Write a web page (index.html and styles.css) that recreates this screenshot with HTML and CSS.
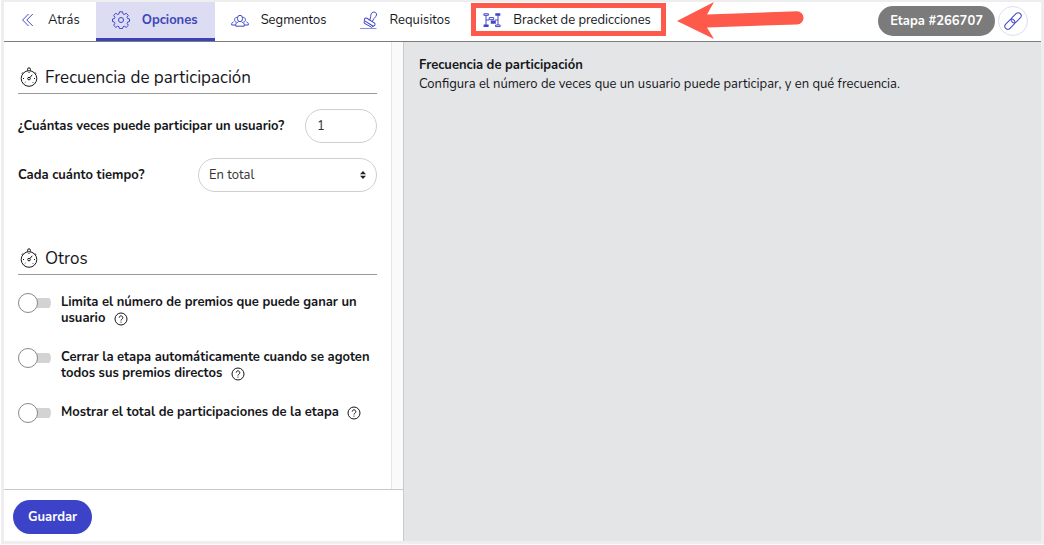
FILE: index.html
```html
<!DOCTYPE html>
<html lang="es">
<head>
<meta charset="utf-8">
<meta name="viewport" content="width=device-width, initial-scale=1">
<title>Opciones de la etapa</title>
<link rel="stylesheet" href="styles.css">
</head>
<body>
<svg class="defs" aria-hidden="true">
  <symbol id="stopwatch" viewBox="0 0 18 20">
    <circle cx="9" cy="11.500" r="7.800"/>
    <path d="M7.600 3.600V2.200a1.400 1.400 0 0 1 2.800 0v1.400M3 5.400 1.900 6.600M15 5.400l1.100 1.200M10 10.600l2.200-2.800"/>
    <circle cx="9" cy="11.600" r="1.300"/>
    <path d="M9 5v1M3 11.500h1M14 11.500h1M4.800 15.700l.7-.7M13.200 15.700l-.7-.7"/>
  </symbol>
  <symbol id="help" viewBox="0 0 14 14">
    <circle cx="7" cy="7" r="6"/>
    <path d="M5.200 5.600a1.800 1.800 0 1 1 2.700 1.600c-.6.400-.9.700-.9 1.300M7 9.600v1"/>
  </symbol>
</svg>
<div class="app">
  <header class="topbar">
    <nav class="tabs">
      <a class="tab tab-back" href="#atras">
        <svg class="icon" viewBox="0 0 18 18"><path d="M8.600 3 2.600 9l6 6M12.800 3l-6 6 6 6"/></svg>
        Atrás
      </a>
      <a class="tab tab-active" href="#opciones" aria-current="page">
        <svg class="icon" viewBox="0 0 18 18"><circle cx="9" cy="9" r="2.500"/><path d="M7.500.8h3l.5 2.100 1.300.6 1.900-1.200 2.100 2.100-1.200 1.900.6 1.300 1.800.4v2.500l-1.900.6-.5 1.300 1.200 1.900-2.100 2.100-1.900-1.200-1.300.6-.5 1.800h-3L7 15.800l-1.300-.6-1.900 1.200-2.100-2.100 1.200-1.900-.5-1.300-1.900-.6V8l1.900-.4.5-1.300-1.200-1.900 2.100-2.100 1.900 1.200L7 2.900z"/></svg>
        Opciones
      </a>
      <a class="tab" href="#segmentos">
        <svg class="icon" viewBox="0 0 18 18"><ellipse cx="9" cy="7.500" rx="2.600" ry="3.200"/><path d="M5.600 11.200a1.900 2.400 0 1 1 .6-4.600M12.400 11.200a1.900 2.400 0 1 0-.6-4.600M4.800 15.200v-1.600c0-1.300 1-2 2.600-2.600M13.200 15.200v-1.600c0-1.300-1-2-2.600-2.600M4.800 15.200h8.400M4.800 14H.7v-1.100c0-1 .8-1.500 1.800-1.900M13.200 14h4.100v-1.100c0-1-.8-1.500-1.800-1.900"/></svg>
        Segmentos
      </a>
      <a class="tab" href="#requisitos">
        <svg class="icon" viewBox="0 0 18 18"><path class="pale" d="M0 17.500h16.500"/><path d="M9.300 9.400c1.300-1.500 1.200-3.200 1.500-5.200.4-2 1.700-3.400 3.700-3.100 2.200.4 2.500 2.600 1.400 4.200-1.100 1.700-2.800 2.700-3.500 5.300"/><rect x="3.700" y="9.300" width="12" height="3.400" rx="1.700" transform="rotate(32 9.700 11)"/><path d="M4.300 10.200 4 12l7.500 4.300 2-1.100"/></svg>
        Requisitos
      </a>
      <a class="tab tab-marked" href="#bracket">
        <svg class="icon" viewBox="0 0 18 18"><path d="M3 4v10M15 4v10M3 9h3M12 9h3"/><path class="solid" d="M12.300 2.300h5v2.400h-5zM7.800 9.500h5v3.200h-5zM.6 13.600h5V16h-5z"/><path class="hollow" d="M.9 2.800h4.500v1.500H.9zM6.200 6.600h4.500v2.100H6.200zM12.600 14h4.500v1.600h-4.500z"/></svg>
        Bracket de predicciones
        <span class="marker"></span>
        <svg class="arrow" viewBox="0 0 130 38" aria-hidden="true"><path d="M0 19 37 0 30 12.500 120 9.200a6.600 6.600 0 0 1 0 13.200L30 25.500 37 37z"/></svg>
      </a>
    </nav>
    <div class="stage">
      <span class="badge">Etapa #266707</span>
      <button class="link-button" type="button" aria-label="Copiar enlace">
        <svg class="icon" viewBox="0 0 18 18"><g transform="rotate(-45 9 9)"><rect x="-1.300" y="6" width="11.600" height="6" rx="3"/><rect x="7.700" y="6" width="11.600" height="6" rx="3"/></g></svg>
      </button>
    </div>
  </header>
  <div class="content">
    <form class="panel">
      <div class="scroll">
        <section class="group">
          <h2 class="heading"><svg class="watch"><use href="#stopwatch"/></svg>Frecuencia de participación</h2>
          <div class="field">
            <label for="veces">¿Cuántas veces puede participar un usuario?</label>
            <input class="control control-small" id="veces" type="text" inputmode="numeric" value="1">
          </div>
          <div class="field">
            <label for="tiempo">Cada cuánto tiempo?</label>
            <span class="select-wrap">
              <select class="control" id="tiempo"><option>En total</option></select>
              <svg class="caret" viewBox="0 0 6 8"><path d="M0 3.200 3 0l3 3.200zM0 4.800h6L3 8z"/></svg>
            </span>
          </div>
        </section>
        <section class="group">
          <h2 class="heading"><svg class="watch"><use href="#stopwatch"/></svg>Otros</h2>
          <div class="option">
            <input class="switch" id="limite" type="checkbox" role="switch">
            <label for="limite">Limita el número de premios que puede ganar un usuario <svg class="help"><use href="#help"/></svg></label>
          </div>
          <div class="option">
            <input class="switch" id="cerrar" type="checkbox" role="switch">
            <label for="cerrar">Cerrar la etapa automáticamente cuando se agoten todos sus premios directos <svg class="help"><use href="#help"/></svg></label>
          </div>
          <div class="option">
            <input class="switch" id="mostrar" type="checkbox" role="switch">
            <label for="mostrar">Mostrar el total de participaciones de la etapa <svg class="help"><use href="#help"/></svg></label>
          </div>
        </section>
      </div>
      <footer class="actions"><button class="save" type="button">Guardar</button></footer>
    </form>
    <main class="info">
      <h1 class="info-title">Frecuencia de participación</h1>
      <p class="info-text">Configura el número de veces que un usuario puede participar, y en qué frecuencia.</p>
    </main>
  </div>
</div>
</body>
</html>
```
FILE: styles.css
```css
* { box-sizing: border-box; }
body {
  margin: 0;
  min-height: 100vh;
  display: flex;
  padding: 0 0 1px 1px;
  background: #fff;
  color: #15161a;
  font: 13px/16px Nunito, "Noto Sans", sans-serif;
}
svg { fill: none; stroke: currentColor; stroke-width: 1; }
.defs { position: absolute; width: 0; height: 0; }
.app {
  flex: 1;
  display: flex;
  flex-direction: column;
  border: 3px solid #eeeeef;
  border-top-width: 2px;
}
.topbar {
  display: flex;
  justify-content: space-between;
  height: 40px;
  border-bottom: 1px solid #7d7d7d;
  background: #fff;
}
.tabs { display: flex; }
.tab {
  position: relative;
  display: flex;
  align-items: center;
  gap: 12px;
  padding: 0 17px 3px 16px;
  color: inherit;
  text-decoration: none;
  white-space: nowrap;
}
.tab-back { gap: 10px; padding-right: 16px; }
.icon { flex: none; width: 18px; height: 18px; color: #4046c8; }
.tab-active {
  padding-bottom: 0;
  border-bottom: 3px solid #3c43b8;
  background: #dcddf3;
  color: #4046b9;
  font-weight: 700;
}
.solid { fill: #4046c8; stroke: none; }
.hollow { fill: #fff; }
.pale { opacity: 0.6; }
.marker {
  position: absolute;
  inset: 1px 2px 5px 4px;
  border: 5px solid #fd5a4b;
}
.arrow {
  position: absolute;
  left: 100%;
  top: 0;
  width: 130px;
  height: 38px;
  margin-left: 9px;
  fill: #fd5a4b;
  stroke: none;
}
.stage { display: flex; align-items: center; gap: 3px; padding: 0 13px 1px 0; }
.badge {
  padding: 7px 12px;
  border-radius: 15px;
  background: #7b7b7b;
  color: #fff;
  font-weight: 700;
}
.link-button {
  display: grid;
  place-items: center;
  width: 30px;
  height: 30px;
  padding: 0;
  border: 1px solid #dddef3;
  border-radius: 50%;
  background: #fff;
}
.content { flex: 1; display: flex; }
.panel {
  display: flex;
  flex-direction: column;
  width: 400px;
  border-right: 1px solid #c9cacd;
  background: #fff;
}
.scroll {
  flex: 1;
  padding: 20px 15px 0 14px;
  border-right: 11px solid #fafafa;
  box-shadow: inset -1px 0 #e6e6e6;
}
.group { margin-bottom: 51px; }
.heading {
  display: flex;
  align-items: center;
  gap: 7px;
  height: 32px;
  margin: 0 0 15px;
  padding: 0 0 0 2px;
  border-bottom: 1px solid #999;
  font-size: 17px;
  font-weight: 400;
}
.watch { width: 18px; height: 20px; margin-bottom: 2px; }
.field {
  display: flex;
  align-items: center;
  justify-content: space-between;
  margin-bottom: 15px;
  font-weight: 700;
}
.control {
  width: 100%;
  height: 34px;
  padding: 0 10px;
  border: 1px solid #cfcfcf;
  border-radius: 17px;
  background: #fff;
  color: #333;
  font: inherit;
  font-weight: 400;
  appearance: none;
}
.control-small { width: 72px; padding: 0 11px; }
.select-wrap { position: relative; width: 179px; }
.caret {
  position: absolute;
  right: 11px;
  top: 13px;
  width: 6px;
  height: 8px;
  fill: #222;
  stroke: none;
  pointer-events: none;
}
.option {
  display: flex;
  align-items: flex-start;
  gap: 10px;
  margin: 19px 0 23px;
  font-weight: 700;
}
.switch {
  flex: none;
  display: flex;
  align-items: center;
  width: 33px;
  height: 18px;
  margin: 0;
  border-radius: 9px;
  background: linear-gradient(#d3d3d3, #d3d3d3) right 4px / 24px 10px no-repeat;
  appearance: none;
}
.switch::before {
  content: "";
  width: 18px;
  height: 18px;
  border: 1px solid #888;
  border-radius: 50%;
  background: #fff;
}
.help { width: 14px; height: 14px; margin-left: 5px; vertical-align: -4px; }
.actions { padding: 10px 9px 7px; border-top: 1px solid #c9c9c9; }
.save {
  height: 34px;
  padding: 0 15px;
  border: 0;
  border-radius: 17px;
  background: #3c43c8;
  color: #fff;
  font: inherit;
  font-weight: 700;
}
.info { flex: 1; padding: 15px; background: #e4e5e7; }
.info-title { margin: 0 0 3px; font-size: 13px; line-height: 16px; font-weight: 700; }
.info-text { margin: 0; }
```
